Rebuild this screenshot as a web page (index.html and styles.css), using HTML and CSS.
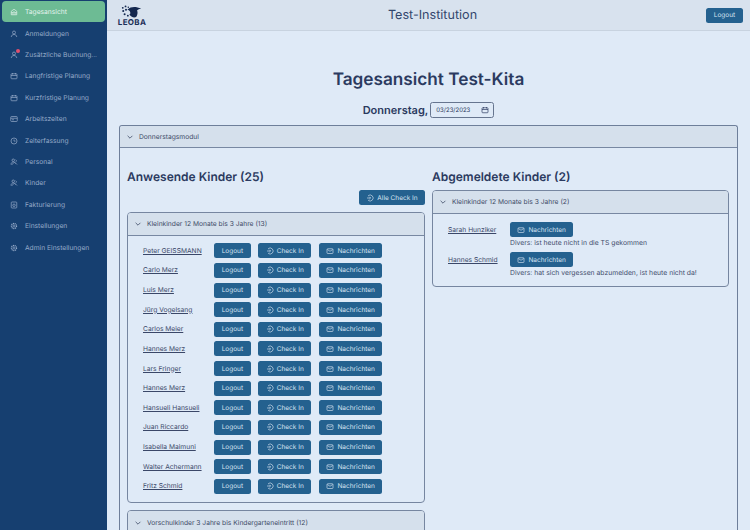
FILE: index.html
```html
<!DOCTYPE html>
<html lang="de">
<head>
<meta charset="utf-8">
<title>Tagesansicht</title>
<link rel="stylesheet" href="styles.css">
</head>
<body>
<svg class="sprite" width="0" height="0" aria-hidden="true">
  <symbol id="i-mail" viewBox="0 0 16 16"><rect x="2" y="3.500" width="12" height="9.500" rx="1.500" fill="none" stroke="currentColor" stroke-width="1.300"/><path d="M2.500 5l5.500 3.500L13.500 5" fill="none" stroke="currentColor" stroke-width="1.300"/></symbol>
  <symbol id="i-check" viewBox="0 0 16 16"><path d="M4 3.800A6 6 0 1 1 4 12.200M2 8h7M6.800 5.600L9.200 8l-2.400 2.400" fill="none" stroke="currentColor" stroke-width="1.300"/></symbol>
  <symbol id="i-chev" viewBox="0 0 10 10"><path d="M2 3.500l3 3 3-3" fill="none" stroke="currentColor" stroke-width="1"/></symbol>
  <symbol id="i-cal" viewBox="0 0 16 16"><rect x="2" y="3.500" width="12" height="10" rx="1.500" fill="none" stroke="currentColor" stroke-width="1.400"/><path d="M2 7h12M5 2v3M11 2v3" fill="none" stroke="currentColor" stroke-width="1.400"/></symbol>
  <symbol id="i-home" viewBox="0 0 16 16"><path d="M2.500 6.500L8 2.500l5.500 4v7h-11zM6 13V8h4v5M2.500 9.500H6M10 9.500h3.500" fill="none" stroke="currentColor" stroke-width="1.400"/></symbol>
  <symbol id="i-user" viewBox="0 0 16 16"><circle cx="8" cy="5" r="3" fill="none" stroke="currentColor" stroke-width="1.400"/><path d="M2.500 14c.5-3.500 2.500-5 5.500-5s5 1.500 5.500 5" fill="none" stroke="currentColor" stroke-width="1.400"/></symbol>
  <symbol id="i-card" viewBox="0 0 16 16"><rect x="1.500" y="3" width="13" height="10" rx="1.500" fill="none" stroke="currentColor" stroke-width="1.400"/><path d="M1.500 6.500h13M4 9.500h4" fill="none" stroke="currentColor" stroke-width="1.400"/></symbol>
  <symbol id="i-clock" viewBox="0 0 16 16"><circle cx="8" cy="8" r="6" fill="none" stroke="currentColor" stroke-width="1.400"/><path d="M8 5v3.200h3" fill="none" stroke="currentColor" stroke-width="1.400"/></symbol>
  <symbol id="i-people" viewBox="0 0 16 16"><circle cx="6.500" cy="4.500" r="2.500" fill="none" stroke="currentColor" stroke-width="1.400"/><path d="M2 13c0-3 2-5 4.500-5 2 0 3.500 1 4.500 3M9 8l5 5M3 14l5-5M11 3.500a2.500 2.500 0 0 1 1 4" fill="none" stroke="currentColor" stroke-width="1.400"/></symbol>
  <symbol id="i-bill" viewBox="0 0 16 16"><rect x="2.500" y="2" width="11" height="12" rx="1.500" fill="none" stroke="currentColor" stroke-width="1.400"/><circle cx="8" cy="8.500" r="2.500" fill="none" stroke="currentColor" stroke-width="1.400"/></symbol>
  <symbol id="i-gear" viewBox="0 0 16 16"><circle cx="8" cy="8" r="2.200" fill="none" stroke="currentColor" stroke-width="1.400"/><circle cx="8" cy="8" r="5.200" fill="none" stroke="currentColor" stroke-width="2.200" stroke-dasharray="2.300 1.300"/></symbol>
</svg>
<div class="app">
  <nav class="sidebar">
    <a class="nav-item active"><svg class="nav-icon"><use href="#i-home"/></svg>Tagesansicht</a>
    <a class="nav-item"><svg class="nav-icon"><use href="#i-user"/></svg>Anmeldungen</a>
    <a class="nav-item"><span class="nav-icon-wrap"><svg class="nav-icon"><use href="#i-user"/></svg><span class="badge"></span></span>Zusätzliche Buchung...</a>
    <a class="nav-item"><svg class="nav-icon"><use href="#i-cal"/></svg>Langfristige Planung</a>
    <a class="nav-item"><svg class="nav-icon"><use href="#i-cal"/></svg>Kurzfristige Planung</a>
    <a class="nav-item"><svg class="nav-icon"><use href="#i-card"/></svg>Arbeitszeiten</a>
    <a class="nav-item"><svg class="nav-icon"><use href="#i-clock"/></svg>Zeiterfassung</a>
    <a class="nav-item"><svg class="nav-icon"><use href="#i-people"/></svg>Personal</a>
    <a class="nav-item"><svg class="nav-icon"><use href="#i-people"/></svg>Kinder</a>
    <a class="nav-item"><svg class="nav-icon"><use href="#i-bill"/></svg>Fakturierung</a>
    <a class="nav-item"><svg class="nav-icon"><use href="#i-gear"/></svg>Einstellungen</a>
    <a class="nav-item"><svg class="nav-icon"><use href="#i-gear"/></svg>Admin Einstellungen</a>
  </nav>
  <div class="content">
    <header class="topbar">
      <div class="logo">
        <svg class="logo-mark" viewBox="0 0 26 14">
          <circle cx="3" cy="3" r="1" /><circle cx="6" cy="1.500" r="1"/><circle cx="3.500" cy="6.500" r="1.100"/><circle cx="6.500" cy="5" r="1.100"/><circle cx="5" cy="10" r="1.100"/><circle cx="8.500" cy="11.500" r="1"/><circle cx="9" cy="2.500" r=".8"/>
          <path d="M8 5c4-3.500 9-3.500 15-1-3 .5-4 1-4.500 2 1 2 .5 5-1 7-2.500 1-6 0-7.500-3 1 0 1.500-1 1-2.500-.5-1.500-1.500-2.500-3-2.500z"/>
        </svg>
        <span class="logo-text">LEOBA</span>
      </div>
      <div class="topbar-title">Test-Institution</div>
      <button class="btn btn-logout">Logout</button>
    </header>
    <main class="main">
      <h1 class="page-title">Tagesansicht Test-Kita</h1>
      <div class="date-row">
        <span class="day">Donnerstag,</span>
        <span class="date-input"><span>03/23/2023</span><svg class="date-icon"><use href="#i-cal"/></svg></span>
      </div>
      <section class="module">
        <div class="panel-head module-head"><svg class="chev"><use href="#i-chev"/></svg>Donnerstagsmodul</div>
        <div class="columns">
          <div class="col-left">
            <h2 class="col-title">Anwesende Kinder (25)</h2>
            <div class="all-row"><button class="btn btn-all"><svg class="btn-icon"><use href="#i-check"/></svg>Alle Check In</button></div>
            <section class="panel panel-present">
              <div class="panel-head"><svg class="chev"><use href="#i-chev"/></svg>Kleinkinder 12 Monate bis 3 Jahre (13)</div>
              <div class="rows">
                <div class="row"><a class="name">Peter GEISSMANN</a><button class="btn btn-out">Logout</button><button class="btn btn-check"><svg class="btn-icon"><use href="#i-check"/></svg>Check In</button><button class="btn btn-msg"><svg class="btn-icon"><use href="#i-mail"/></svg>Nachrichten</button></div>
                <div class="row"><a class="name">Carlo Merz</a><button class="btn btn-out">Logout</button><button class="btn btn-check"><svg class="btn-icon"><use href="#i-check"/></svg>Check In</button><button class="btn btn-msg"><svg class="btn-icon"><use href="#i-mail"/></svg>Nachrichten</button></div>
                <div class="row"><a class="name">Luis Merz</a><button class="btn btn-out">Logout</button><button class="btn btn-check"><svg class="btn-icon"><use href="#i-check"/></svg>Check In</button><button class="btn btn-msg"><svg class="btn-icon"><use href="#i-mail"/></svg>Nachrichten</button></div>
                <div class="row"><a class="name">Jürg Vogelsang</a><button class="btn btn-out">Logout</button><button class="btn btn-check"><svg class="btn-icon"><use href="#i-check"/></svg>Check In</button><button class="btn btn-msg"><svg class="btn-icon"><use href="#i-mail"/></svg>Nachrichten</button></div>
                <div class="row"><a class="name">Carlos Meier</a><button class="btn btn-out">Logout</button><button class="btn btn-check"><svg class="btn-icon"><use href="#i-check"/></svg>Check In</button><button class="btn btn-msg"><svg class="btn-icon"><use href="#i-mail"/></svg>Nachrichten</button></div>
                <div class="row"><a class="name">Hannes Merz</a><button class="btn btn-out">Logout</button><button class="btn btn-check"><svg class="btn-icon"><use href="#i-check"/></svg>Check In</button><button class="btn btn-msg"><svg class="btn-icon"><use href="#i-mail"/></svg>Nachrichten</button></div>
                <div class="row"><a class="name">Lars Fringer</a><button class="btn btn-out">Logout</button><button class="btn btn-check"><svg class="btn-icon"><use href="#i-check"/></svg>Check In</button><button class="btn btn-msg"><svg class="btn-icon"><use href="#i-mail"/></svg>Nachrichten</button></div>
                <div class="row"><a class="name">Hannes Merz</a><button class="btn btn-out">Logout</button><button class="btn btn-check"><svg class="btn-icon"><use href="#i-check"/></svg>Check In</button><button class="btn btn-msg"><svg class="btn-icon"><use href="#i-mail"/></svg>Nachrichten</button></div>
                <div class="row"><a class="name">Hansueli Hansueli</a><button class="btn btn-out">Logout</button><button class="btn btn-check"><svg class="btn-icon"><use href="#i-check"/></svg>Check In</button><button class="btn btn-msg"><svg class="btn-icon"><use href="#i-mail"/></svg>Nachrichten</button></div>
                <div class="row"><a class="name">Juan Riccardo</a><button class="btn btn-out">Logout</button><button class="btn btn-check"><svg class="btn-icon"><use href="#i-check"/></svg>Check In</button><button class="btn btn-msg"><svg class="btn-icon"><use href="#i-mail"/></svg>Nachrichten</button></div>
                <div class="row"><a class="name">Isabella Maimuni</a><button class="btn btn-out">Logout</button><button class="btn btn-check"><svg class="btn-icon"><use href="#i-check"/></svg>Check In</button><button class="btn btn-msg"><svg class="btn-icon"><use href="#i-mail"/></svg>Nachrichten</button></div>
                <div class="row"><a class="name">Walter Achermann</a><button class="btn btn-out">Logout</button><button class="btn btn-check"><svg class="btn-icon"><use href="#i-check"/></svg>Check In</button><button class="btn btn-msg"><svg class="btn-icon"><use href="#i-mail"/></svg>Nachrichten</button></div>
                <div class="row"><a class="name">Fritz Schmid</a><button class="btn btn-out">Logout</button><button class="btn btn-check"><svg class="btn-icon"><use href="#i-check"/></svg>Check In</button><button class="btn btn-msg"><svg class="btn-icon"><use href="#i-mail"/></svg>Nachrichten</button></div>
              </div>
            </section>
            <section class="panel panel-next">
              <div class="panel-head"><svg class="chev"><use href="#i-chev"/></svg>Vorschulkinder 3 Jahre bis Kindergarteneintritt (12)</div>
            </section>
          </div>
          <div class="col-right">
            <h2 class="col-title">Abgemeldete Kinder (2)</h2>
            <section class="panel">
              <div class="panel-head"><svg class="chev"><use href="#i-chev"/></svg>Kleinkinder 12 Monate bis 3 Jahre (2)</div>
              <div class="rows rows-right">
                <div class="absent">
                  <div class="absent-line"><a class="name name-right">Sarah Hunziker</a><button class="btn btn-msg"><svg class="btn-icon"><use href="#i-mail"/></svg>Nachrichten</button></div>
                  <p class="note">Divers: ist heute nicht in die TS gekommen</p>
                </div>
                <div class="absent">
                  <div class="absent-line"><a class="name name-right">Hannes Schmid</a><button class="btn btn-msg"><svg class="btn-icon"><use href="#i-mail"/></svg>Nachrichten</button></div>
                  <p class="note">Divers: hat sich vergessen abzumelden, ist heute nicht da!</p>
                </div>
              </div>
            </section>
          </div>
        </div>
      </section>
    </main>
  </div>
</div>
</body>
</html>
```
FILE: styles.css
```css
* { box-sizing: border-box; }
html, body { margin: 0; height: 530px; overflow: hidden; }
body { font-family: Inter, "Liberation Sans", sans-serif; color: #2a3a5e; background: #dfeaf7; text-rendering: geometricPrecision; }
.sprite { position: absolute; }
.app { display: flex; height: 530px; }

.sidebar { width: 107px; flex: none; background: #163f70; padding: 1px 2px 0; display: flex; flex-direction: column; }
.nav-item { display: flex; align-items: center; gap: 7px; height: 21.4px; padding-left: 8px; font-size: 6.700px; color: #96abc9; white-space: nowrap; }
.nav-item.active { height: 21px; margin-bottom: 1px; background: #6dbb94; color: #e6f3ee; border-radius: 4px; }
.nav-icon { width: 8px; height: 8px; flex: none; }
.nav-icon-wrap { position: relative; display: flex; width: 8px; height: 8px; flex: none; }
.badge { position: absolute; top: -2px; right: -2px; width: 4px; height: 4px; border-radius: 50%; background: #e0506e; }

.content { flex: 1; min-width: 0; display: flex; flex-direction: column; }
.topbar { height: 31px; flex: none; display: flex; align-items: center; justify-content: space-between; padding: 0 7px 0 10px; background: #d8e2ee; border-bottom: 1px solid #c8d3e0; }
.logo { display: flex; flex-direction: column; align-items: center; width: 30px; }
.logo-mark { width: 24px; height: 13px; fill: #14284f; }
.logo-text { font-size: 8px; line-height: 8px; font-weight: 700; letter-spacing: .3px; color: #1b2f57; }
.topbar-title { font-size: 12.600px; color: #33466c; margin-left: 12px; }

.btn { border: 0; border-radius: 2.500px; background: #24618f; color: #d5e2ef; font: 400 6.500px Inter, "Liberation Sans", sans-serif; text-rendering: geometricPrecision; display: inline-flex; align-items: center; justify-content: center; padding: 0; white-space: nowrap; }
.btn-logout { width: 37px; height: 15px; }
.btn-icon { width: 8px; height: 8px; margin-right: 3px; flex: none; }

.main { flex: 1; min-height: 0; padding: 38px 12px 0; }
.page-title { margin: 0; text-align: center; font-size: 17.200px; line-height: 22px; font-weight: 600; color: #2b3a60; }
.date-row { display: flex; justify-content: center; align-items: center; gap: 2px; margin-top: 11px; height: 16px; }
.day { font-size: 11px; font-weight: 600; color: #2b3a60; }
.date-input { width: 64px; height: 16px; border: 1px solid #66758f; border-radius: 2.500px; display: flex; align-items: center; justify-content: space-between; padding: 0 4px 0 5px; font-size: 6px; color: #2b3a60; }
.date-icon { width: 8px; height: 8px; }

.module { margin-top: 7px; height: 420px; border: 1px solid #6e7f9a; border-bottom: 0; border-radius: 3px 3px 0 0; }
.panel-head { height: 23px; display: flex; align-items: center; padding-left: 6px; gap: 5px; font-size: 6.700px; color: #3d4a66; background: #d5e0ec; border-bottom: 1px solid #7888a2; border-radius: 3px 3px 0 0; white-space: nowrap; }
.module-head { height: 22px; }
.chev { width: 8px; height: 8px; flex: none; }
.columns { display: flex; padding: 0 8px 0 7px; gap: 7px; }
.col-left { width: 298px; flex: none; }
.col-right { flex: 1; min-width: 0; }
.col-title { margin: 22px 0 0; font-size: 12px; line-height: 14px; font-weight: 600; color: #2b3a60; }
.all-row { display: flex; justify-content: flex-end; margin-top: 6px; }
.btn-all { width: 66px; height: 15px; }

.panel { margin-top: 6px; border: 1px solid #7686a0; border-radius: 4px; }
.panel-present { margin-top: 7px; }
.panel-next { margin-top: 7px; height: 30px; }
.panel-next .panel-head { border-bottom: 0; }
.rows { padding: 5px 0 6px 15px; display: flex; flex-direction: column; }
.row { display: flex; align-items: center; height: 19.640px; }
.name { width: 71px; flex: none; font-size: 6.700px; color: #3a4768; text-decoration: underline; white-space: nowrap; }
.btn-out { width: 36.700px; height: 15px; margin-right: 7.700px; }
.btn-check { width: 52.700px; height: 15px; margin-right: 8px; }
.btn-msg { width: 63.300px; height: 15px; }

.rows-right { padding: 8px 0 8px 15px; gap: 4px; }
.absent-line { display: flex; align-items: center; height: 15px; }
.name-right { width: 62px; }
.note { margin: 1px 0 0 62px; font-size: 6.800px; line-height: 10px; color: #3f4d6c; white-space: nowrap; }
```
